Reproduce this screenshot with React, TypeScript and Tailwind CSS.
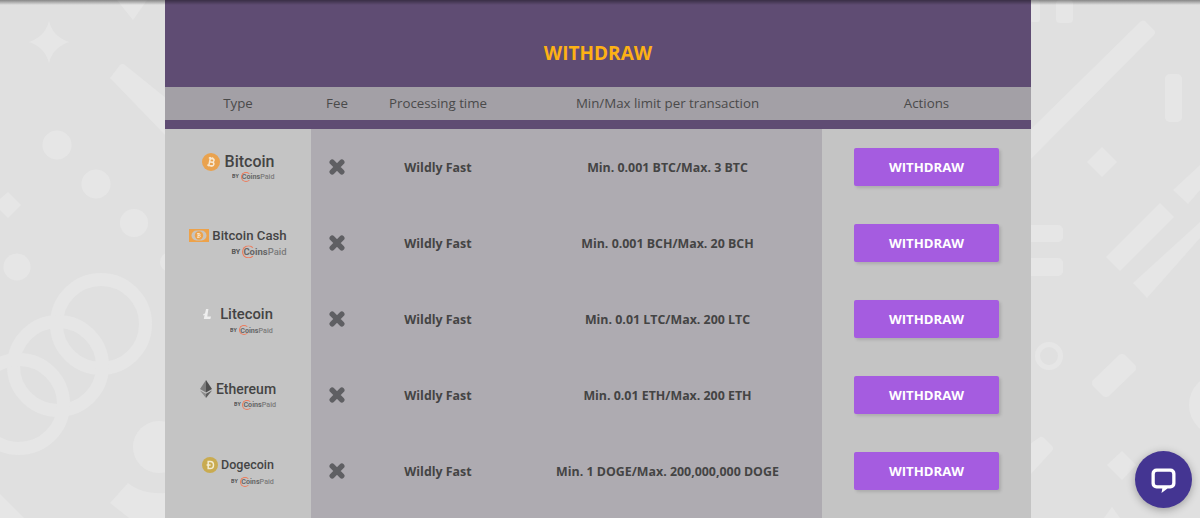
interface CoinRow {
  name: string;
  limit: string;
  nameClass: string;
  subClass: string;
  wrapClass: string;
  icon: React.ReactNode;
}

const BitcoinIcon = (
  <svg width="18" height="18" viewBox="0 0 18 18">
    <circle cx="9" cy="9" r="9" fill="#e9a24e" />
    <path
      d="M7.600 4.200v9.600M9.800 4.200v1.400M9.800 12.400v1.400M6 5.400h4c2.200 0 2.200 3.400 0 3.600H7.400h3c2.500 0 2.500 3.600 0 3.600H6"
      fill="none"
      stroke="#f8e8d0"
      strokeWidth="1.5"
      transform="rotate(12 9 9)"
    />
  </svg>
);

const BitcoinCashIcon = (
  <svg width="20" height="13" viewBox="0 0 20 13">
    <rect width="20" height="13" fill="#eda24a" />
    <rect x="2.500" y="1.500" width="15" height="10" rx="5" fill="#c9c4bd" />
    <circle cx="10" cy="6.500" r="4.200" fill="#eda24a" />
    <path d="M9 4v5M8.200 4.500h2.200c1 0 1 1.800 0 1.800H9h1.600c1 0 1 2 0 2H8.200" fill="none" stroke="#f9e6cc" strokeWidth=".9" />
  </svg>
);

const LitecoinIcon = (
  <svg width="8" height="10" viewBox="0 0 8 10">
    <path d="M3 0h2.400L4.300 7.400H8L7.400 10H.8L1.600 6 0 6.500.4 5l1.600-.6z" fill="#eeeeee" />
  </svg>
);

const EthereumIcon = (
  <svg width="12" height="18" viewBox="0 0 12 18">
    <path d="M6 0 0 9l6 3.400z" fill="#7d7d7d" />
    <path d="M6 0l6 9-6 3.400z" fill="#4f4f4f" />
    <path d="M0 10.400 6 18v-4.200z" fill="#8c8c8c" />
    <path d="M12 10.400 6 18v-4.200z" fill="#5d5d5d" />
  </svg>
);

const DogecoinIcon = (
  <svg width="16" height="16" viewBox="0 0 16 16">
    <circle cx="8" cy="8" r="8" fill="#c9ab50" />
    <path d="M6.200 4.400h2c4.400 0 4.400 7.200 0 7.200h-2zM4.600 8h4" fill="none" stroke="#f3ecd2" strokeWidth="1.500" />
  </svg>
);

const coins: CoinRow[] = [
  { name: "Bitcoin", limit: "Min. 0.001 BTC/Max. 3 BTC", nameClass: "text-[16px] gap-[5px]", subClass: "mt-[2px] text-[7.2px]", wrapClass: "", icon: BitcoinIcon },
  { name: "Bitcoin Cash", limit: "Min. 0.001 BCH/Max. 20 BCH", nameClass: "text-[13.2px] gap-[3px]", subClass: "mt-[5px] text-[9.5px]", wrapClass: "", icon: BitcoinCashIcon },
  { name: "Litecoin", limit: "Min. 0.01 LTC/Max. 200 LTC", nameClass: "text-[14.8px] gap-[9px]", subClass: "mt-[5px] text-[7.2px]", wrapClass: "pt-[3px]", icon: LitecoinIcon },
  { name: "Ethereum", limit: "Min. 0.01 ETH/Max. 200 ETH", nameClass: "text-[14px] gap-[4px]", subClass: "mt-[3px] text-[7.2px]", wrapClass: "pb-[1px]", icon: EthereumIcon },
  { name: "Dogecoin", limit: "Min. 1 DOGE/Max. 200,000,000 DOGE", nameClass: "text-[12.5px] gap-[3px]", subClass: "mt-[5px] text-[7.2px]", wrapClass: "pt-[1px]", icon: DogecoinIcon },
];

const GRID = "grid grid-cols-[146px_52px_150px_309px_209px]";

function Backdrop() {
  return (
    <svg className="absolute inset-0" width="1200" height="518" viewBox="0 0 1200 518">
      <g fill="#e6e6e6" stroke="none">
        <path d="M49 21c3 11 9 17 20 21-11 4-17 10-20 21-3-11-9-17-20-21 11-4 17-10 20-21z" />
        <path d="M117 0h30l-14 20z" />
        <path d="M8 192l13 13-13 13-9-9v-9z" />
        <circle cx="57" cy="145" r="14.500" />
        <circle cx="96" cy="184" r="14.500" />
        <circle cx="134" cy="223" r="14" />
        <circle cx="17" cy="267" r="13.500" />
        <circle cx="170" cy="262" r="10" />
        <circle cx="159" cy="447" r="26" />
        <path d="M128 483c10 8 22 11 37 10v25h-36l-19-15z" />
        <path d="M0 494l24 24H0z" />
        <path d="M110 78l10-13a4 4 0 0 1 5 0l41 33v38z" />
        <path d="M1140 22a4 4 0 0 1 5-1l9 9a4 4 0 0 1 0 5L1030 160v-30z" />
        <rect x="1030" y="0" width="10" height="22" rx="3" />
        <rect x="1056" y="0" width="17" height="23" rx="4" />
        <rect x="1165" y="74" width="17" height="48" rx="5" />
        <path d="M1102 147l15 15-15 15-15-15z" />
        <path d="M1173 190l27-25v25l-12 14z" />
        <rect x="1026" y="225" width="37" height="17" rx="5" />
        <rect x="1026" y="258" width="37" height="18" rx="5" />
        <path d="M1160 203l14 14-54 54-14-14z" />
        <path d="M1200 222v16l-53 60-14-15z" />
        <path d="M1119 355a5 5 0 0 1 6 0l10 10a5 5 0 0 1 0 6l-26 25a5 5 0 0 1-6 0l-10-10a5 5 0 0 1 0-6z" />
        <circle cx="1220" cy="405" r="31" />
        <path d="M1030 444l10-7a4 4 0 0 1 4 1l8 8a4 4 0 0 1 0 5l-22 24z" />
        <path d="M1122 451l14 14-14 15-15-15z" />
        <path d="M1112 507l8 11h-16z" />
      </g>
      <g fill="none" stroke="#e6e6e6" strokeWidth="13">
        <circle cx="101" cy="324" r="44.500" />
        <circle cx="58" cy="366" r="44.500" />
        <circle cx="19" cy="404" r="44.500" />
        <circle cx="1049" cy="356" r="11.500" strokeWidth="5" />
      </g>
    </svg>
  );
}

function FeeCross() {
  return (
    <svg width="16" height="16" viewBox="0 0 16 16">
      <path d="M3.200 3.200l9.600 9.600M12.800 3.200l-9.600 9.600" fill="none" stroke="#5f5f63" strokeWidth="5.400" strokeLinecap="round" />
    </svg>
  );
}

function CoinLogo({ coin }: { coin: CoinRow }) {
  return (
    <div className={`flex flex-col items-end font-['Roboto',sans-serif] font-medium text-[#444444] ${coin.wrapClass}`}>
      <div className={`flex items-center leading-none ${coin.nameClass}`}>
        {coin.icon}
        <span>{coin.name}</span>
      </div>
      <div className={`flex items-center leading-none text-[#7a7a7a] ${coin.subClass}`}>
        <span className="mr-[2px] scale-75 font-bold text-[#555555]">BY</span>
        <span className="relative font-bold text-[#666666]">
          C
          <span className="absolute top-1/2 left-[-0.15em] size-[1.400em] -translate-y-1/2 rounded-full border border-[#ee7a5a] border-r-transparent" />
        </span>
        <span className="font-bold text-[#666666]">oins</span>
        <span>Paid</span>
      </div>
    </div>
  );
}

export default function App() {
  return (
    <div className="relative h-[518px] w-[1200px] overflow-hidden bg-[#e0e0e0] font-['Open_Sans',sans-serif]">
      <Backdrop />

      <main className="relative ml-[165px] flex w-[866px] flex-col">
        <h1 className="flex h-[87px] items-center justify-center bg-[#5f4c73] pt-[19px] text-[19px] font-bold text-[#fdb115]">
          WITHDRAW
        </h1>
        <div className={`${GRID} h-[33px] items-center bg-[#a3a0a6] text-center text-[13.3px] text-[#4a4a4a]`}>
          <div>Type</div>
          <div>Fee</div>
          <div>Processing time</div>
          <div>Min/Max limit per transaction</div>
          <div>Actions</div>
        </div>
        <div className="h-[9px] bg-[#5f4c73]" />

        {coins.map((coin) => (
          <div key={coin.name} className={`${GRID} h-[76px] text-center text-[12.4px] font-bold text-[#444444]`}>
            <div className="flex items-center justify-center bg-[#c4c4c4]">
              <CoinLogo coin={coin} />
            </div>
            <div className="flex items-center justify-center bg-[#aeabb1] pb-[1px]">
              <FeeCross />
            </div>
            <div className="flex items-center justify-center bg-[#aeabb1] pt-[2px]">Wildly Fast</div>
            <div className="flex items-center justify-center bg-[#aeabb1] pt-[2px]">{coin.limit}</div>
            <div className="flex items-center justify-center bg-[#c4c4c4]">
              <button
                type="button"
                className="h-[38px] w-[145px] rounded-[2px] bg-[#a55ce0] pt-[2px] text-[13.2px] font-bold text-white shadow-[2px_2px_3px_rgba(0,0,0,0.12)]"
              >
                WITHDRAW
              </button>
            </div>
          </div>
        ))}

        <div className={`${GRID} h-[9px]`}>
          <div className="bg-[#c4c4c4]" />
          <div className="col-span-3 bg-[#aeabb1]" />
          <div className="bg-[#c4c4c4]" />
        </div>
      </main>

      <div className="absolute inset-x-0 top-0 h-[5px] bg-gradient-to-b from-black/40 to-transparent" />

      <button
        type="button"
        aria-label="Chat"
        className="absolute right-[8px] bottom-[10px] flex size-[57px] items-center justify-center rounded-full bg-[#443592] shadow-[0_2px_8px_rgba(0,0,0,0.3)]"
      >
        <svg width="27" height="27" viewBox="0 0 27 27">
          <path
            fillRule="evenodd"
            d="M6.500 2.500h14a5 5 0 0 1 5 5v10a5 5 0 0 1-5 5h-3l-6 4.500 .8-4.500H6.500a5 5 0 0 1-5-5v-10a5 5 0 0 1 5-5zM7 5.800a2.200 2.200 0 0 0-2.200 2.200v9a2.200 2.200 0 0 0 2.200 2.200h13a2.200 2.200 0 0 0 2.200-2.200v-9a2.200 2.200 0 0 0-2.200-2.200z"
            fill="#ffffff"
          />
        </svg>
      </button>
    </div>
  );
}
